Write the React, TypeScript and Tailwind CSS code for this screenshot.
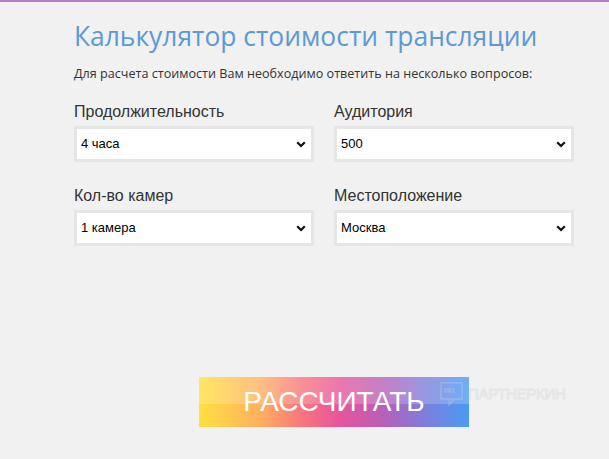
import { useState } from "react";

type Field = { label: string; value: string; options: string[] };

function SelectBox({ field, onChange }: { field: Field; onChange: (v: string) => void }) {
  return (
    <div className="flex flex-col">
      <label className="h-[24px] text-[16px] leading-[24px] text-[#333]">{field.label}</label>
      <div className="relative mt-[2px] h-[36px] border-[3px] border-[#e6e6e6] bg-white">
        <select
          value={field.value}
          onChange={(e) => onChange(e.target.value)}
          className="h-full w-full appearance-none bg-white pl-[4px] text-[13px] text-black outline-none"
        >
          {field.options.map((o) => (
            <option key={o}>{o}</option>
          ))}
        </select>
        <svg className="pointer-events-none absolute right-[5px] top-[12px] h-[7px] w-[10px]" viewBox="0 0 10 7">
          <path d="M1.2 1.2 5 5 8.8 1.2" fill="none" stroke="#111" strokeWidth="2.2" />
        </svg>
      </div>
    </div>
  );
}

export default function App() {
  const [fields, setFields] = useState<Field[]>([
    { label: "Продолжительность", value: "4 часа", options: ["1 час", "2 часа", "3 часа", "4 часа", "8 часов"] },
    { label: "Аудитория", value: "500", options: ["100", "250", "500", "1000"] },
    { label: "Кол-во камер", value: "1 камера", options: ["1 камера", "2 камеры", "3 камеры"] },
    { label: "Местоположение", value: "Москва", options: ["Москва", "Санкт-Петербург", "Другой город"] },
  ]);

  function update(i: number, v: string) {
    setFields((prev) => prev.map((f, idx) => (idx === i ? { ...f, value: v } : f)));
  }

  return (
    <div className="min-h-screen border-t-2 border-[#b77ac6] bg-[#f1f1f1] font-['Liberation_Sans',Arial,sans-serif]">
      <div className="ml-[74px] w-[500px] pt-[16px]">
        <h1 className="font-['Open_Sans',sans-serif] text-[26.4px] leading-[36px] text-[#5b9ad6]">
          Калькулятор стоимости трансляции
        </h1>
        <p className="mt-[12px] font-['Open_Sans',sans-serif] text-[12.6px] leading-[16px] text-[#333]">
          Для расчета стоимости Вам необходимо ответить на несколько вопросов:
        </p>

        <div className="mt-[18px] grid grid-cols-2 gap-x-[20px] gap-y-[22px]">
          {fields.map((f, i) => (
            <SelectBox key={f.label} field={f} onChange={(v) => update(i, v)} />
          ))}
        </div>
      </div>

      <div className="relative ml-[199px] mt-[131px] w-[270px]">
        <button className="relative flex h-[50px] w-[270px] items-center justify-center overflow-hidden bg-[linear-gradient(90deg,#ffe03f_0%,#ffb25e_22%,#f9757c_38%,#e7559a_52%,#b95fb8_68%,#7c7fdc_84%,#4a9bf4_100%)] text-[28px] text-white">
          <span className="absolute inset-x-0 top-0 h-[27px] bg-white/20" />
          <span className="relative">РАССЧИТАТЬ</span>
        </button>
        <div className="pointer-events-none absolute left-[241px] top-[5px] flex items-center gap-[5px] opacity-35">
          <svg width="23" height="25" viewBox="0 0 23 25">
            <rect x="1" y="1" width="21" height="16" fill="none" stroke="#d9d9d9" strokeWidth="1.2" />
            <rect x="5" y="7" width="4" height="3" fill="none" stroke="#d9d9d9" />
            <rect x="10" y="7" width="4" height="3" fill="none" stroke="#d9d9d9" />
            <path d="M9 17v6l5-6" fill="none" stroke="#d9d9d9" strokeWidth="1.2" />
          </svg>
          <span className="text-[15px] tracking-[-0.3px] text-transparent [-webkit-text-stroke:1px_#d0d0d0]">ПАРТНЕРКИН</span>
        </div>
      </div>
    </div>
  );
}
